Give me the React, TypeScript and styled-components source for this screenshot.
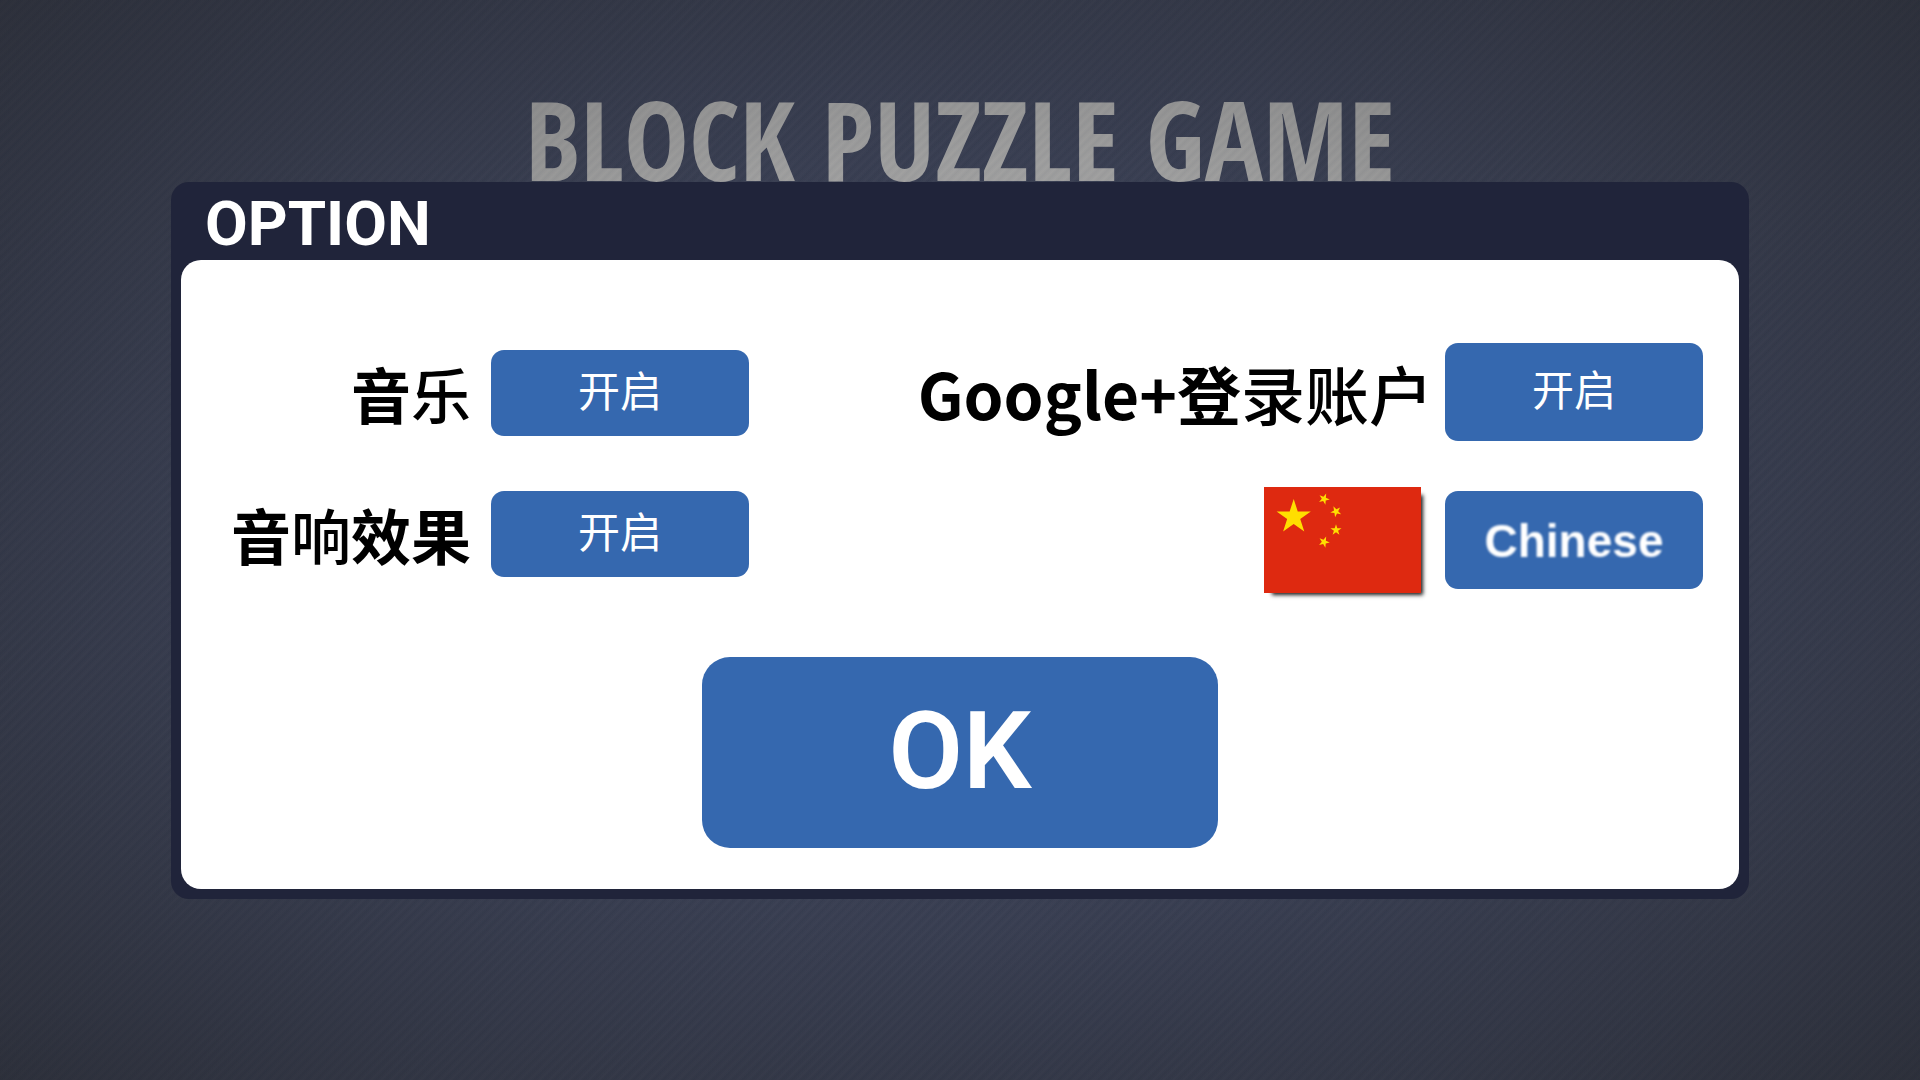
import React, { useState } from "react";
import styled, { createGlobalStyle } from "styled-components";

const GlobalStyle = createGlobalStyle`
  *, *::before, *::after { box-sizing: border-box; }
  body { margin: 0; background: #3e4359; }
`;

const cjk = `"Noto Sans CJK SC", "Noto Sans", sans-serif`;

const stripes = (alpha: number) => `repeating-linear-gradient(
  -45deg,
  rgba(20, 32, 52, ${alpha}) 0,
  rgba(20, 32, 52, 0) 3px,
  rgba(20, 32, 52, ${alpha}) 7px
)`;

const Page = styled.main`
  position: relative;
  min-height: 100vh;
  padding: 94px 171px 60px;
  background: ${stripes(0.08)}, #40465c;
  font-family: ${cjk};
`;

/* Faint stripes and vignette laid over the menu behind the dialog */
const Shade = styled.div`
  position: absolute;
  inset: 0;
  pointer-events: none;
  background:
    ${stripes(0.05)},
    radial-gradient(
      farthest-corner at 50% 50%,
      rgba(30, 29, 26, 0) 0%,
      rgba(30, 29, 26, 0.12) 50%,
      rgba(30, 30, 30, 0.52) 100%
    );
`;

const GameTitle = styled.h1`
  margin: 0;
  padding-top: 2px;
  color: #b2b2b2;
  font: 700 109px/86px "Open Sans Condensed", "Roboto Condensed", sans-serif;
  text-align: center;
  white-space: nowrap;
`;

const Dialog = styled.section`
  position: relative;
  z-index: 1;
  padding: 0 10px 10px;
  border-radius: 18px;
  background: #20243a;
`;

const DialogTitle = styled.h2`
  margin: 0;
  padding: 6px 24px 0;
  color: #fff;
  font: 700 62px/72px Roboto, sans-serif;
`;

const Panel = styled.div`
  display: flex;
  flex-direction: column;
  align-items: center;
  gap: 64px;
  padding: 83px 36px 41px;
  border-radius: 20px;
  background: #fff;
`;

const Columns = styled.div`
  display: flex;
  justify-content: space-between;
  align-self: stretch;
`;

const Column = styled.div<{ $gap: number; $top?: number; $min?: number }>`
  display: flex;
  flex-direction: column;
  align-items: flex-end;
  gap: ${(p) => p.$gap}px;
  min-width: ${(p) => p.$min ?? 0}px;
  padding-top: ${(p) => p.$top ?? 0}px;
`;

const OptionRow = styled.div<{ $gap: number }>`
  display: flex;
  align-items: center;
  gap: ${(p) => p.$gap}px;
`;

const Label = styled.label<{ $size: number }>`
  color: #000;
  font-size: ${(p) => p.$size}px;
  font-weight: 500;
  line-height: 86px;
  white-space: nowrap;
`;

const Strong = styled.b`
  font-weight: 700;
`;

const Button = styled.button`
  border: 0;
  background: #3568af;
  color: #fff;
  cursor: pointer;
`;

const ToggleButton = styled(Button)<{ $height: number }>`
  width: 258px;
  height: ${(p) => p.$height}px;
  padding: 0 0 8px;
  border-radius: 13px;
  font: 400 42px/60px ${cjk};
`;

const LanguageButton = styled(Button)`
  width: 258px;
  height: 98px;
  padding: 2px 0 0;
  border-radius: 13px;
  font: 700 46px/60px "Liberation Sans", sans-serif;
`;

const SoftText = styled.span`
  filter: blur(1px);
`;

const OkButton = styled(Button)`
  width: 516px;
  height: 191px;
  padding: 0 0 4px;
  border-radius: 28px;
  font: 600 108px/124px Roboto, sans-serif;
`;

const Flag = styled.svg`
  display: block;
  width: 157px;
  height: 106px;
  margin-right: 12px;
  background: #de2910;
  box-shadow: 5px 5px 4px -3px rgba(0, 0, 0, 0.9);
`;

function star(cx: number, cy: number, r: number, turn: number) {
  return Array.from({ length: 10 }, (_, i) => {
    const a = ((turn - 90 + i * 36) * Math.PI) / 180;
    const d = i % 2 ? r * 0.382 : r;
    return `${(cx + d * Math.cos(a)).toFixed(2)},${(cy + d * Math.sin(a)).toFixed(2)}`;
  }).join(" ");
}

const stars: [number, number, number, number][] = [
  [29.7, 30, 18, 0],
  [60, 12, 5.8, 22],
  [72, 24.5, 5.8, 45],
  [72, 43, 5.8, 0],
  [60, 55, 5.8, 22],
];

function ChinaFlag() {
  return (
    <Flag viewBox="0 0 157 106" role="img" aria-label="中国">
      {stars.map((s, i) => (
        <polygon key={i} points={star(...s)} fill="#ffde00" />
      ))}
    </Flag>
  );
}

function Toggle({ id, height }: { id: string; height: number }) {
  const [on, setOn] = useState(true);
  return (
    <ToggleButton id={id} $height={height} type="button" aria-pressed={on} onClick={() => setOn(!on)}>
      {on ? "开启" : "关闭"}
    </ToggleButton>
  );
}

export default function App() {
  return (
    <>
      <GlobalStyle />
      <Page>
        <GameTitle>BLOCK PUZZLE GAME</GameTitle>
        <Shade />
        <Dialog role="dialog" aria-labelledby="dialog-title">
          <DialogTitle id="dialog-title">OPTION</DialogTitle>
          <Panel>
            <Columns>
              <Column $gap={55} $top={7} $min={532}>
                <OptionRow $gap={20}>
                  <Label htmlFor="music" $size={60}>
                    <Strong>音</Strong>乐
                  </Label>
                  <Toggle id="music" height={86} />
                </OptionRow>
                <OptionRow $gap={20}>
                  <Label htmlFor="sound" $size={60}>
                    <Strong>音</Strong>响<Strong>效果</Strong>
                  </Label>
                  <Toggle id="sound" height={86} />
                </OptionRow>
              </Column>
              <Column $gap={46}>
                <OptionRow $gap={12}>
                  <Label htmlFor="google" $size={64}>
                    <Strong>Google+登</Strong>录账户
                  </Label>
                  <Toggle id="google" height={98} />
                </OptionRow>
                <OptionRow $gap={12}>
                  <ChinaFlag />
                  <LanguageButton type="button">
                    <SoftText>Chinese</SoftText>
                  </LanguageButton>
                </OptionRow>
              </Column>
            </Columns>
            <OkButton type="button">OK</OkButton>
          </Panel>
        </Dialog>
      </Page>
    </>
  );
}
